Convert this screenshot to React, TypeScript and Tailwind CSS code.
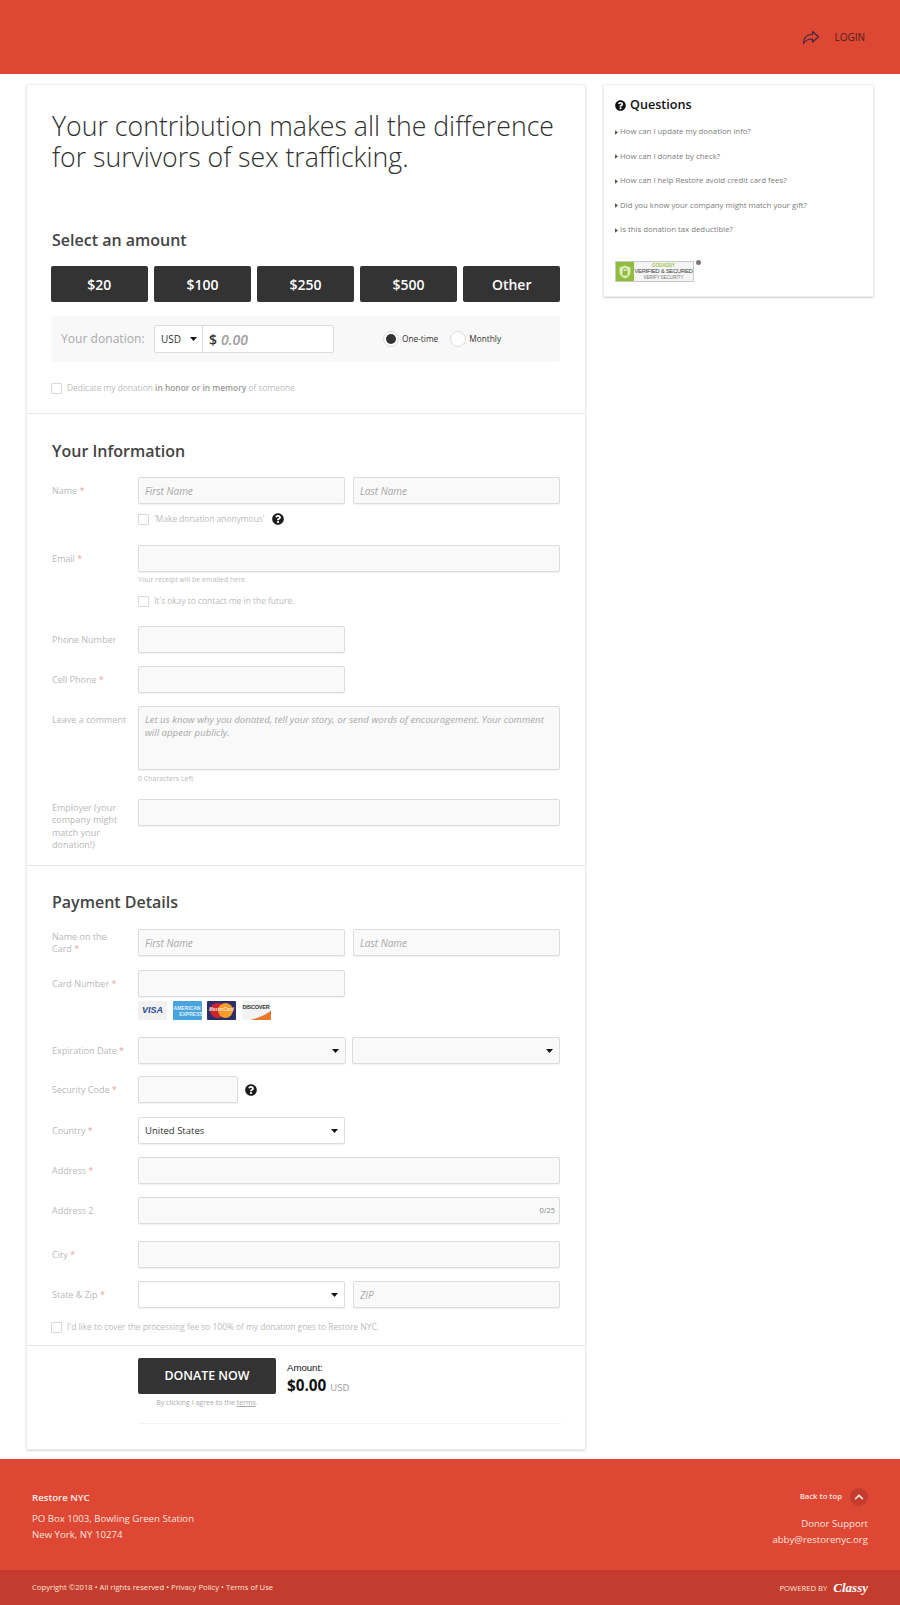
import type { ReactNode } from "react";
import { FaChevronUp, FaQuestionCircle } from "react-icons/fa";

const amounts = ["$20", "$100", "$250", "$500", "Other"];

const questions = [
  "How can I update my donation info?",
  "How can I donate by check?",
  "How can I help Restore avoid credit card fees?",
  "Did you know your company might match your gift?",
  "Is this donation tax deductible?",
];

const inputClass =
  "block h-[27px] w-full rounded-[2px] border border-[#dcdcdc] bg-[#f9f9f9] px-[6px] text-[10px] italic shadow-[0_1px_1px_rgba(0,0,0,0.06)] outline-none placeholder:text-[#a8a8a8]";

function Caret() {
  return (
    <svg viewBox="0 0 7 4" className="h-[4px] w-[7px] shrink-0 fill-[#111]">
      <polygon points="0,0 7,0 3.5,4" />
    </svg>
  );
}

function Req() {
  return <span className="text-[#eba398]"> *</span>;
}

function Row({ label, req, labelClass, className, children }: {
  label: string;
  req?: boolean;
  labelClass?: string;
  className?: string;
  children: ReactNode;
}) {
  return (
    <div className={`flex ${className ?? ""}`}>
      <div className={`w-[86px] shrink-0 pr-[8px] text-[9px] leading-[12.3px] text-[#b9b9b9] ${labelClass ?? "pt-[8px]"}`}>
        {label}
        {req && <Req />}
      </div>
      <div className="flex min-w-0 flex-1 gap-[8px]">{children}</div>
    </div>
  );
}

function Half({ children }: { children?: ReactNode }) {
  return <div className="w-[207px] shrink-0">{children}</div>;
}

function Select({ value, white, className }: { value?: string; white?: boolean; className?: string }) {
  return (
    <div
      className={`flex h-[27px] items-center justify-between rounded-[2px] border border-[#dcdcdc] pl-[6px] pr-[6px] text-[9.5px] text-[#333] shadow-[0_1px_1px_rgba(0,0,0,0.06)] ${white ? "bg-white" : "bg-[#f9f9f9]"} ${className ?? ""}`}
    >
      <span>{value}</span>
      <Caret />
    </div>
  );
}

function Check({ children, className }: { children: ReactNode; className?: string }) {
  return (
    <div className={`flex h-[14px] items-center text-[8.4px] text-[#bbb] ${className ?? ""}`}>
      <span className="mr-[5px] h-[11px] w-[11px] shrink-0 rounded-[1px] border border-[#d9d9d9] bg-white" />
      {children}
    </div>
  );
}

function Help() {
  return <FaQuestionCircle className="shrink-0 text-[12px] text-[#1c1c1c]" />;
}

function CardLogos() {
  return (
    <div className="mt-[4px] flex h-[19px] gap-[5.5px] font-['Liberation_Sans',sans-serif]">
      <div className="flex h-[19px] w-[29px] items-center justify-center rounded-[1px] bg-[#f1f1f1] text-[9px] font-bold italic text-[#2a4a8e]">
        VISA
      </div>
      <div className="flex h-[19px] w-[29px] flex-col items-center justify-center rounded-[1px] bg-[#4ba3de] text-[5px] font-bold leading-[6px] text-[#dff0fb]">
        <span>AMERICAN</span>
        <span className="pl-[8px]">EXPRESS</span>
      </div>
      <div className="relative h-[19px] w-[29px] overflow-hidden rounded-[1px] bg-[#2b2e6b]">
        <svg viewBox="0 0 29 19" className="h-[19px] w-[29px]">
          <circle cx="10.5" cy="9.5" r="7.5" fill="#cf2430" />
          <circle cx="18.5" cy="9.5" r="7.5" fill="#f59d2a" />
        </svg>
        <span className="absolute inset-x-0 top-[6px] text-center text-[4.5px] font-bold italic leading-[6px] text-[#fbe3d0]">MasterCard</span>
      </div>
      <div className="relative h-[19px] w-[29px] overflow-hidden rounded-[1px] bg-[#f3f3f3]">
        <svg viewBox="0 0 29 19" className="absolute inset-0 h-[19px] w-[29px]">
          <path d="M8 19C16 17 24 14 29 9.5V19Z" fill="#e8772e" />
        </svg>
        <span className="absolute inset-x-0 top-[3px] text-center text-[5.5px] font-bold leading-[7px] tracking-[-0.2px] text-[#333]">DISCOVER</span>
      </div>
    </div>
  );
}

function GoDaddyBadge() {
  return (
    <div className="relative mt-[24px] w-[80px]">
      <div className="flex h-[21px] w-[79px] border border-[#c9c9c9] bg-[#f4f4f4] font-['Liberation_Sans',sans-serif]">
        <div className="flex w-[18px] shrink-0 items-center justify-center bg-[#8fbe3c]">
          <svg viewBox="0 0 12 14" className="h-[14px] w-[12px]">
            <path d="M6 .5 11.5 2.5V7c0 3.4-2.4 5.4-5.5 6.5C2.9 12.4.5 10.4.5 7V2.5Z" fill="#dcebbd" />
            <rect x="3.5" y="6" width="5" height="4.5" fill="#8fbe3c" />
            <path d="M4.5 6V4.8a1.5 1.5 0 0 1 3 0V6" fill="none" stroke="#8fbe3c" />
          </svg>
        </div>
        <div className="flex-1 whitespace-nowrap text-center leading-none">
          <div className="mt-[1px] text-[4.5px] font-bold leading-[5px] text-[#9dc34c]">GODADDY</div>
          <div className="text-[6px] leading-[7px] tracking-[-0.35px] text-[#444]">VERIFIED &amp; SECURED</div>
          <div className="text-[4.5px] leading-[5px] text-[#777]">VERIFY SECURITY</div>
        </div>
      </div>
      <span className="absolute -right-[6px] -top-[1px] h-[5px] w-[5px] rounded-full bg-[#777]" />
    </div>
  );
}

export default function App() {
  return (
    <div className="h-[1605px] w-[900px] overflow-hidden bg-white font-['Open_Sans',sans-serif] text-[#333]">
      {/* Top bar */}
      <header className="flex h-[74px] items-center justify-end bg-[#dd4733] pr-[35px]">
        <svg viewBox="0 0 24 20" className="h-[15px] w-[18px] fill-none stroke-[#3a2a3f] stroke-[1.6]">
          <path d="M14 2l8 7-8 7v-4C9 12 5 13 2 18 2 11 6 6 14 6z" strokeLinejoin="round" />
        </svg>
        <span className="ml-[14px] text-[10px] font-medium text-[#4a2323]">LOGIN</span>
      </header>

      <main className="flex items-start gap-[17px] pl-[26px] pt-[10px]">
        {/* Donation form */}
        <div className="h-[1366px] w-[560px] shrink-0 rounded-[2px] border border-[#ececec] shadow-[0_1px_2px_rgba(0,0,0,0.15)]">
          <section className="border-b border-[#e8e8e8] px-[25px] pb-[18px] pt-[25px]">
            <h1 className="w-[510px] text-[26.7px] font-light leading-[31px] text-[#2f2f2f]">
              Your contribution makes all the difference for survivors of sex trafficking.
            </h1>
            <h2 className="mt-[56px] text-[16px] font-semibold leading-[24px] text-[#444]">Select an amount</h2>
            <div className="ml-[-1px] mt-[14px] flex w-[509px] gap-[6.5px]">
              {amounts.map((amount) => (
                <button
                  key={amount}
                  className="h-[36px] flex-1 rounded-[2px] bg-[#333] text-[14px] font-semibold text-white"
                >
                  {amount}
                </button>
              ))}
            </div>
            <div className="ml-[-1px] mt-[14px] flex h-[46px] w-[509px] items-center rounded-[2px] bg-[#f8f8f8] pl-[10px]">
              <span className="w-[93px] text-[12.1px] text-[#aaa]">Your donation:</span>
              <div className="flex h-[28px] w-[180px] rounded-[2px] border border-[#ddd] bg-white">
                <div className="flex w-[48px] items-center gap-[9px] border-r border-[#ddd] pl-[6px] text-[10px]">
                  USD
                  <Caret />
                </div>
                <div className="flex items-center pl-[6px] text-[14px] font-semibold">
                  $<span className="ml-[4px] italic text-[#a0a0a0]">0.00</span>
                </div>
              </div>
              <span className="ml-[49px] flex h-[16px] w-[16px] items-center justify-center rounded-full border border-[#ddd] bg-white">
                <span className="h-[10px] w-[10px] rounded-full bg-[#333]" />
              </span>
              <span className="ml-[3px] text-[8.3px]">One-time</span>
              <span className="ml-[12px] h-[16px] w-[16px] rounded-full border border-[#ddd] bg-white" />
              <span className="ml-[3px] text-[8.3px]">Monthly</span>
            </div>
            <Check className="ml-[-1px] mt-[19px]">
              <span>
                Dedicate my donation <b className="font-semibold text-[#999]">in honor or in memory</b> of someone
              </span>
            </Check>
          </section>

          <section className="border-b border-[#e8e8e8] px-[25px] pb-[14px] pt-[25px]">
            <h2 className="text-[16px] font-semibold leading-[24px] text-[#444]">Your Information</h2>
            <Row label="Name" req className="mt-[14px]">
              <Half><input className={inputClass} placeholder="First Name" /></Half>
              <Half><input className={inputClass} placeholder="Last Name" /></Half>
            </Row>
            <Row label="" labelClass="pt-0" className="mt-[8px]">
              <Check>
                <span>'Make donation anonymous'</span>
                <span className="ml-[7px]"><Help /></span>
              </Check>
            </Row>
            <Row label="Email" req className="mt-[19px]">
              <input className={inputClass} />
            </Row>
            <Row label="" labelClass="pt-0" className="mt-[2px]">
              <p className="text-[7px] leading-[12px] text-[#bbb]">Your receipt will be emailed here.</p>
            </Row>
            <Row label="" labelClass="pt-0" className="mt-[8px]">
              <Check>It's okay to contact me in the future.</Check>
            </Row>
            <Row label="Phone Number" className="mt-[18px]">
              <Half><input className={inputClass} /></Half>
            </Row>
            <Row label="Cell Phone" req className="mt-[13px]">
              <Half><input className={inputClass} /></Half>
            </Row>
            <Row label="Leave a comment" className="mt-[13px]">
              <textarea
                className={`${inputClass} !h-[64px] resize-none py-[6px] !text-[9.6px] leading-[13px]`}
                placeholder="Let us know why you donated, tell your story, or send words of encouragement. Your comment will appear publicly."
              />
            </Row>
            <Row label="" labelClass="pt-0" className="mt-[3px]">
              <p className="text-[7px] leading-[12px] text-[#bbb]">0 Characters Left</p>
            </Row>
            <Row label="Employer (your company might match your donation!)" labelClass="pt-[3px] !pr-[12px]" className="mt-[14px]">
              <input className={inputClass} />
            </Row>
          </section>

          <section className="border-b border-[#e8e8e8] px-[25px] pb-[11px] pt-[24px]">
            <h2 className="text-[16px] font-semibold leading-[24px] text-[#444]">Payment Details</h2>
            <Row label="Name on the Card" req labelClass="pt-[2px] !pr-[14px]" className="mt-[15px]">
              <Half><input className={inputClass} placeholder="First Name" /></Half>
              <Half><input className={inputClass} placeholder="Last Name" /></Half>
            </Row>
            <Row label="Card Number" req className="mt-[14px]">
              <Half>
                <input className={inputClass} />
                <CardLogos />
              </Half>
            </Row>
            <Row label="Expiration Date" req className="mt-[17px]">
              <Select className="w-[208px]" />
              <Select className="ml-[-2px] w-[208px]" />
            </Row>
            <Row label="Security Code" req className="mt-[12px]">
              <div className="flex items-center gap-[7px]">
                <input className={`${inputClass} !w-[100px]`} />
                <Help />
              </div>
            </Row>
            <Row label="Country" req className="mt-[14px]">
              <Select white value="United States" className="w-[207px]" />
            </Row>
            <Row label="Address" req className="mt-[13px]">
              <input className={inputClass} />
            </Row>
            <Row label="Address 2" className="mt-[13px]">
              <div className="relative w-full">
                <input className={inputClass} />
                <span className="absolute right-[5px] top-[7px] text-[7.5px] leading-[12px] text-[#888]">0/25</span>
              </div>
            </Row>
            <Row label="City" req className="mt-[17px]">
              <input className={inputClass} />
            </Row>
            <Row label="State & Zip" req className="mt-[13px]">
              <Select white className="w-[207px]" />
              <Half><input className={inputClass} placeholder="ZIP" /></Half>
            </Row>
            <Check className="ml-[-1px] mt-[12px]">I'd like to cover the processing fee so 100% of my donation goes to Restore NYC.</Check>
          </section>

          <section className="pl-[111px] pt-[12px]">
            <div className="flex">
              <div className="w-[138px]">
                <button className="h-[36px] w-[138px] rounded-[2px] bg-[#333] text-[12.4px] font-semibold text-white">
                  DONATE NOW
                </button>
                <p className="mt-[3px] text-center text-[7px] leading-[12px] text-[#aaa]">
                  By clicking I agree to the <span className="underline">terms</span>.
                </p>
              </div>
              <div className="ml-[11px] text-[#111]">
                <p className="mt-[4px] font-['Liberation_Sans',sans-serif] text-[9.6px] leading-[12px]">Amount:</p>
                <p className="text-[15.3px] font-bold leading-[22px]">
                  $0.00 <span className="text-[9.5px] font-normal text-[#999]">USD</span>
                </p>
              </div>
            </div>
            <div className="mr-[24px] mt-[14px] border-t border-[#f2f2f2]" />
          </section>
        </div>

        {/* Questions */}
        <aside className="h-[213px] w-[271px] shrink-0 rounded-[2px] border border-[#eee] px-[11px] pt-[11px] shadow-[0_1px_2px_rgba(0,0,0,0.2)]">
          <h3 className="flex items-center gap-[4px] text-[12.6px] font-semibold leading-[18px] text-[#111]">
            <FaQuestionCircle className="text-[11px] text-[#111]" />
            Questions
          </h3>
          <ul className="mt-[11px] flex flex-col gap-[10.5px]">
            {questions.map((question) => (
              <li key={question} className="flex h-[14px] items-center text-[7.8px] text-[#7c7c7c]">
                <svg viewBox="0 0 4 6" className="mr-[2px] h-[5px] w-[3px] shrink-0 fill-[#555]">
                  <polygon points="0,0 4,3 0,6" />
                </svg>
                {question}
              </li>
            ))}
          </ul>
          <GoDaddyBadge />
        </aside>
      </main>

      {/* Footer */}
      <footer className="mt-[9px] text-[#fbe4df]">
        <div className="flex h-[111px] justify-between bg-[#dd4733] px-[32px]">
          <div className="pt-[31px]">
            <p className="text-[9.65px] font-semibold leading-[16px] text-[#fdeee9]">Restore NYC</p>
            <p className="mt-[5px] text-[9.65px] leading-[15.5px]">
              PO Box 1003, Bowling Green Station
              <br />
              New York, NY 10274
            </p>
          </div>
          <div className="pt-[29px] text-right">
            <div className="flex h-[18px] items-center justify-end gap-[8px]">
              <span className="text-[7.75px] font-semibold">Back to top</span>
              <span className="flex h-[18px] w-[18px] items-center justify-center rounded-full bg-[#c43c2d]">
                <FaChevronUp className="text-[10px] text-[#fbe4df]" />
              </span>
            </div>
            <p className="mt-[10px] text-[9.6px] leading-[15.5px]">
              Donor Support
              <br />
              abby@restorenyc.org
            </p>
          </div>
        </div>
        <div className="flex h-[35px] items-center justify-between bg-[#c43c2d] px-[32px] text-[7.7px]">
          <span>Copyright ©2018 • All rights reserved • Privacy Policy • Terms of Use</span>
          <span className="flex items-center">
            <span className="mt-[3px]">POWERED BY</span>
            <span className="ml-[6px] font-['Liberation_Serif',serif] text-[13px] font-bold italic text-white">Classy</span>
          </span>
        </div>
      </footer>
    </div>
  );
}
